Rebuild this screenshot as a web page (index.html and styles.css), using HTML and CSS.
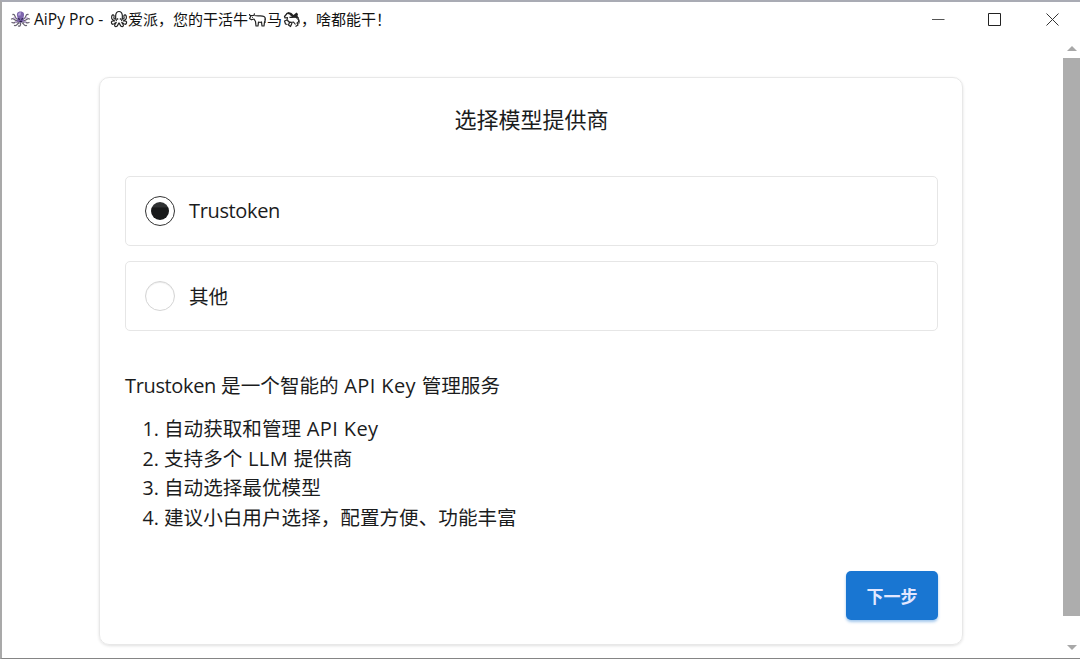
FILE: index.html
```html
<!DOCTYPE html>
<html lang="zh-CN">
<head>
  <meta charset="UTF-8">
  <title>AiPy Pro</title>
  <link rel="stylesheet" href="styles.css">
</head>
<body>
  <div class="window">
    <header class="titlebar">
      <svg class="app-icon" viewBox="0 0 20 18">
        <g fill="none" stroke="#66616f" stroke-width="1.300" stroke-linecap="round">
          <path d="M6.500 9C4 8 5 4 2.500 4.500M7 10.500C4 11 3.500 7.500 1 9M7.500 12C5 11 4 14 1.500 12.500M8.500 13C7 13 6.500 16.500 4 15.500M10 13.500C10.500 15.500 9 16.500 8 16"/>
          <path d="M13.500 8.500C16 8 14.500 4 17.500 4.500M13.500 10.500C16 11 16.500 7.500 19 9M13 12C15 11 16 14 18.500 12.500M12 13C13 13 13.500 16.500 16 15.500"/>
        </g>
        <path d="M7 7.500C5.500 3.500 7 1.500 10 1.500S14.500 3.500 13 7.500L13.500 10.500C12 13.500 8 13.500 6.500 10.500Z" fill="#7d65ac"/>
        <path d="M7.500 5.500C7.500 3 8.500 2.200 10.500 2.200L10 5.500Z" fill="#b5a5da"/>
        <path d="M7.500 8.500L9.500 9.500M12.500 8.500L10.800 9.500M9 11.500h2.500" stroke="#2a2148" stroke-width="1.300"/>
        <path d="M4.500 12.500l2-1M13.500 11.500l2 1M3 7.500l2 1M15 8.500l2-1" stroke="#b79ad6" stroke-width="1.200"/>
      </svg>
      <div class="caption">
        <span class="caption-latin">AiPy Pro -</span>
        <svg class="octopus" viewBox="0 0 18 18">
          <g fill="none" stroke="#222" stroke-width="1.200">
            <path d="M6.500 11C5 8 5 1.500 9 1.500S13 8 11.500 11"/>
            <path d="M6 8.500C4.500 9.500 3.500 8.500 4 7C4.500 5 3 4 2 5.500C1 8 1.500 10 5 11C2 10.500 1 11.500 1.500 13C2 15 4 14.500 5.500 12.500"/>
            <path d="M12 8.500C13.500 9.500 14.500 8.500 14 7C13.500 5 15 4 16 5.500C17 8 16.500 10 13 11C16 10.500 17 11.500 16.500 13C16 15 14 14.500 12.500 12.500"/>
            <path d="M6.500 12C3.500 15.500 4.500 17 6.500 16.500C8 16 7.500 14.500 9 13C10.500 14.500 10 16 11.500 16.500C13.500 17 14.500 15.500 11.500 12"/>
          </g>
          <circle cx="7.600" cy="9" r=".8"/>
          <circle cx="10.400" cy="9" r=".8"/>
        </svg>
        <span>爱派，您的干活牛</span>
        <svg class="ox" viewBox="0 0 18 18">
          <path d="M1 4C1 5.500 2 6 3 5.500L5 5.500C6 5 6 4 5.500 3.500M2.500 6L1 8.500L3 9.800L5.500 9L7 11.500L7.500 16H9.500L10 12C11 12.500 12 12.500 13 12L13.500 16H15.500L16 12C17 10 17 7.500 15.500 6.500C13 5 10 6.500 6 5.500M16.500 8.500V13" fill="none" stroke="#222" stroke-width="1.200" stroke-linejoin="round"/>
          <path d="M3.500 7.300h1" stroke="#222"/>
        </svg>
        <span>马</span>
        <svg class="horse" viewBox="0 0 18 18">
          <path d="M5 3L2 6.500L2.500 8L5 7.500L4.500 10L2 11L3 14L5 14.500M7 7C9 8.500 13 5.500 15.500 8C17 10 16.500 12 14.500 13L15.500 15L13 16.500M5 10C6 13 9 12.500 11 12L13 14.500M7 12.500L6 15L8 16.500L9.500 13" fill="none" stroke="#222" stroke-width="1.200" stroke-linejoin="round"/>
          <path d="M3.500 3.500L6 2L9 3L11 5L14 2.500L15.500 4L15 6L16.500 8L13 7.500L10 7.500L7 4.500Z" fill="#222"/>
          <path d="M14 8.500C17 10 17.500 12 16 14" fill="none" stroke="#222"/>
        </svg>
        <span>，啥都能干！</span>
      </div>
      <div class="controls">
        <svg viewBox="0 0 58 36"><path d="M26 18.500h12.500" stroke="#555"/></svg>
        <svg viewBox="0 0 58 36"><path d="M24.500 12.500h12v12h-12z" fill="none" stroke="#222"/></svg>
        <svg viewBox="0 0 58 36"><path d="M24.500 12.500l12 12M36.500 12.500l-12 12" stroke="#333"/></svg>
      </div>
    </header>
    <div class="content">
      <main class="card">
        <h1 class="title">选择模型提供商</h1>
        <div class="options">
          <label class="option">
            <input type="radio" name="provider" class="radio" checked>
            <span class="option-name brand">Trustoken</span>
          </label>
          <label class="option">
            <input type="radio" name="provider" class="radio">
            <span class="option-name">其他</span>
          </label>
        </div>
        <p class="intro"><span class="brand">Trustoken</span> 是一个智能的<span class="latin"> API Key </span>管理服务</p>
        <ol class="features">
          <li>自动获取和管理<span class="latin"> API Key</span></li>
          <li>支持多个<span class="latin"> LLM </span>提供商</li>
          <li>自动选择最优模型</li>
          <li>建议小白用户选择，配置方便、功能丰富</li>
        </ol>
        <div class="actions">
          <button type="button" class="next">下一步</button>
        </div>
      </main>
      <div class="scrollbar">
        <svg class="arrow" viewBox="0 0 10 5"><path d="M0 5L5 0L10 5z"/></svg>
        <div class="thumb"></div>
        <svg class="arrow arrow-down" viewBox="0 0 10 5"><path d="M0 0L5 5L10 0z"/></svg>
      </div>
    </div>
  </div>
</body>
</html>
```
FILE: styles.css
```css
* {
  box-sizing: border-box;
}

body {
  margin: 0;
  height: 659px;
  overflow: hidden;
  background: #fff;
  color: #1b1c1d;
  font-family: "Open Sans", "Noto Sans CJK SC", sans-serif;
  font-size: 19.6px;
}

/* window frame */
.window {
  height: 659px;
  display: flex;
  flex-direction: column;
  border-top: 2px solid #a9abb4;
  border-left: 2px solid #a9a9a9;
  border-bottom: 1px solid #858585;
}

.titlebar {
  height: 34px;
  flex: none;
  display: flex;
  align-items: center;
  padding-left: 8px;
  color: #111;
}

.app-icon {
  width: 21px;
  height: 18px;
  margin-right: 3px;
}

.caption {
  display: flex;
  align-items: center;
  font-size: 15px;
  line-height: 20px;
  font-family: "Noto Sans CJK SC", sans-serif;
  white-space: nowrap;
}

.caption-latin {
  width: 76px;
  font-family: "Open Sans", sans-serif;
  font-size: 15.6px;
}

.octopus {
  width: 18px;
  height: 18px;
}

.ox,
.horse {
  width: 19px;
  height: 18px;
}

.controls {
  display: flex;
  margin-left: auto;
}

.controls svg {
  width: 58px;
  height: 36px;
}

.content {
  flex: 1;
  min-height: 0;
  display: flex;
}

/* provider card */
.card {
  width: 864px;
  height: 568px;
  margin: 41px 0 0 97px;
  padding: 23px 24px 24px;
  padding-left: 25px;
  display: flex;
  flex-direction: column;
  border: 1px solid #e8e8e8;
  border-radius: 10px;
  box-shadow: 0 1px 3px rgba(0, 0, 0, 0.12);
}

.title {
  margin: 0;
  height: 36px;
  font-size: 22px;
  font-weight: normal;
  line-height: 36px;
  text-align: center;
}

.options {
  display: flex;
  flex-direction: column;
  gap: 15px;
  margin-top: 39px;
}

.option {
  height: 70px;
  display: flex;
  align-items: center;
  gap: 14px;
  padding-left: 19px;
  border: 1px solid #e6e6e6;
  border-radius: 5px;
}

.option-name {
  padding-bottom: 2px;
}

.radio {
  appearance: none;
  width: 30px;
  height: 30px;
  margin: 0;
  border: 1px solid #d5d5d5;
  border-radius: 50%;
  box-shadow: inset 0 1px 1px rgba(0, 0, 0, 0.08);
}

.radio:checked {
  padding: 5px;
  border-color: #333;
  box-shadow: none;
}

.radio:checked::before {
  content: "";
  display: block;
  width: 18px;
  height: 18px;
  border-radius: 50%;
  background: linear-gradient(#303233 25%, #18191a 35%);
}

.intro {
  margin: 39px 0 0;
  line-height: 31px;
}

.brand {
  font-size: 20px;
  letter-spacing: -0.35px;
}

.latin {
  font-size: 20px;
  letter-spacing: 0.4px;
}

.features {
  margin: 13px 0 0;
  padding-left: 39px;
  line-height: 29.6px;
}

.actions {
  display: flex;
  justify-content: flex-end;
  margin-top: auto;
}

.next {
  width: 92px;
  height: 49px;
  padding: 0 0 1px;
  border: 0;
  border-radius: 5px;
  background: #1976d2;
  color: #e2e7ff;
  font: bold 17px/47px "Noto Sans CJK SC", sans-serif;
  box-shadow: 0 2px 3px rgba(25, 118, 210, 0.4);
}

.scrollbar {
  width: 17px;
  margin-left: auto;
  display: flex;
  flex-direction: column;
  align-items: center;
  padding: 10px 0 8px;
}

.arrow {
  width: 10px;
  height: 5px;
  fill: #a8a8a8;
}

.thumb {
  width: 17px;
  height: 558px;
  margin-top: 7px;
  background: #adadad;
}

.arrow-down {
  margin-top: auto;
}
```
